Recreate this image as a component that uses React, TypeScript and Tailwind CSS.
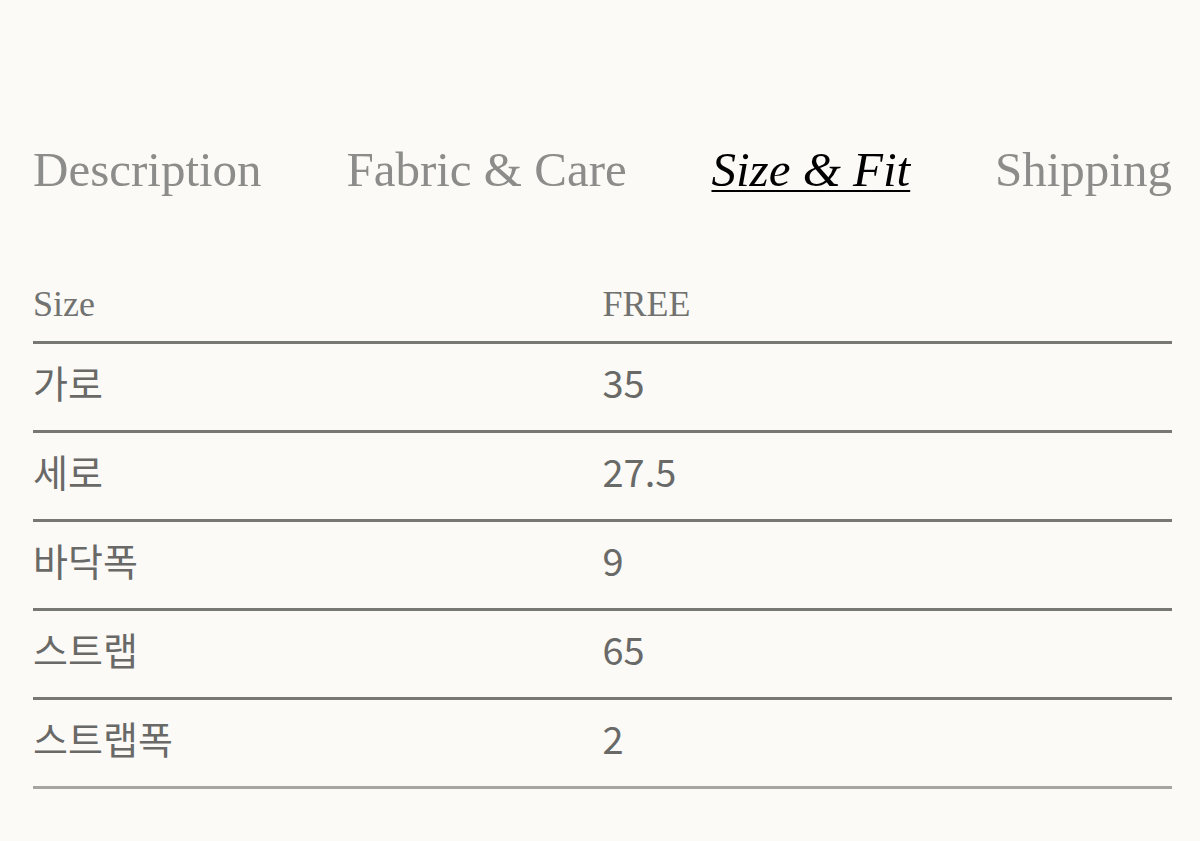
const tabs = [
  { label: "Description", active: false },
  { label: "Fabric & Care", active: false },
  { label: "Size & Fit", active: true },
  { label: "Shipping", active: false },
];

const rows = [
  { name: "가로", value: "35" },
  { name: "세로", value: "27.5" },
  { name: "바닥폭", value: "9" },
  { name: "스트랩", value: "65" },
  { name: "스트랩폭", value: "2" },
];

export default function App() {
  return (
    <div className="min-h-[841px] w-full bg-[#fbfaf7] pl-[33px] pr-[28px] pt-[145px]">
      {/* Tabs */}
      <nav className="flex justify-between font-['Liberation_Serif',serif] text-[49px] leading-none">
        {tabs.map((t) => (
          <button
            key={t.label}
            className={
              t.active
                ? "italic text-black underline decoration-2 underline-offset-[4px]"
                : "text-[#8c8c8a]"
            }
          >
            {t.label}
          </button>
        ))}
      </nav>

      {/* Size table */}
      <div className="mt-[92px]">
        <div className="grid grid-cols-2 pb-[19px] font-['Liberation_Serif',serif] text-[36px] leading-none text-[#727270]">
          <span>Size</span>
          <span>FREE</span>
        </div>
        {rows.map((r, i) => (
          <div
            key={r.name}
            className={
              "grid grid-cols-2 items-center border-t-[3px] border-[#777774] font-['Noto_Sans_CJK_KR','Noto_Sans',sans-serif] text-[38px] leading-none text-[#696967]" +
              (i === rows.length - 1
                ? " h-[92px] border-b-[3px] border-b-[#a5a5a2]"
                : " h-[89px]")
            }
          >
            <span className="-mt-[10px]">{r.name}</span>
            <span className="-mt-[10px]">{r.value}</span>
          </div>
        ))}
      </div>
    </div>
  );
}
